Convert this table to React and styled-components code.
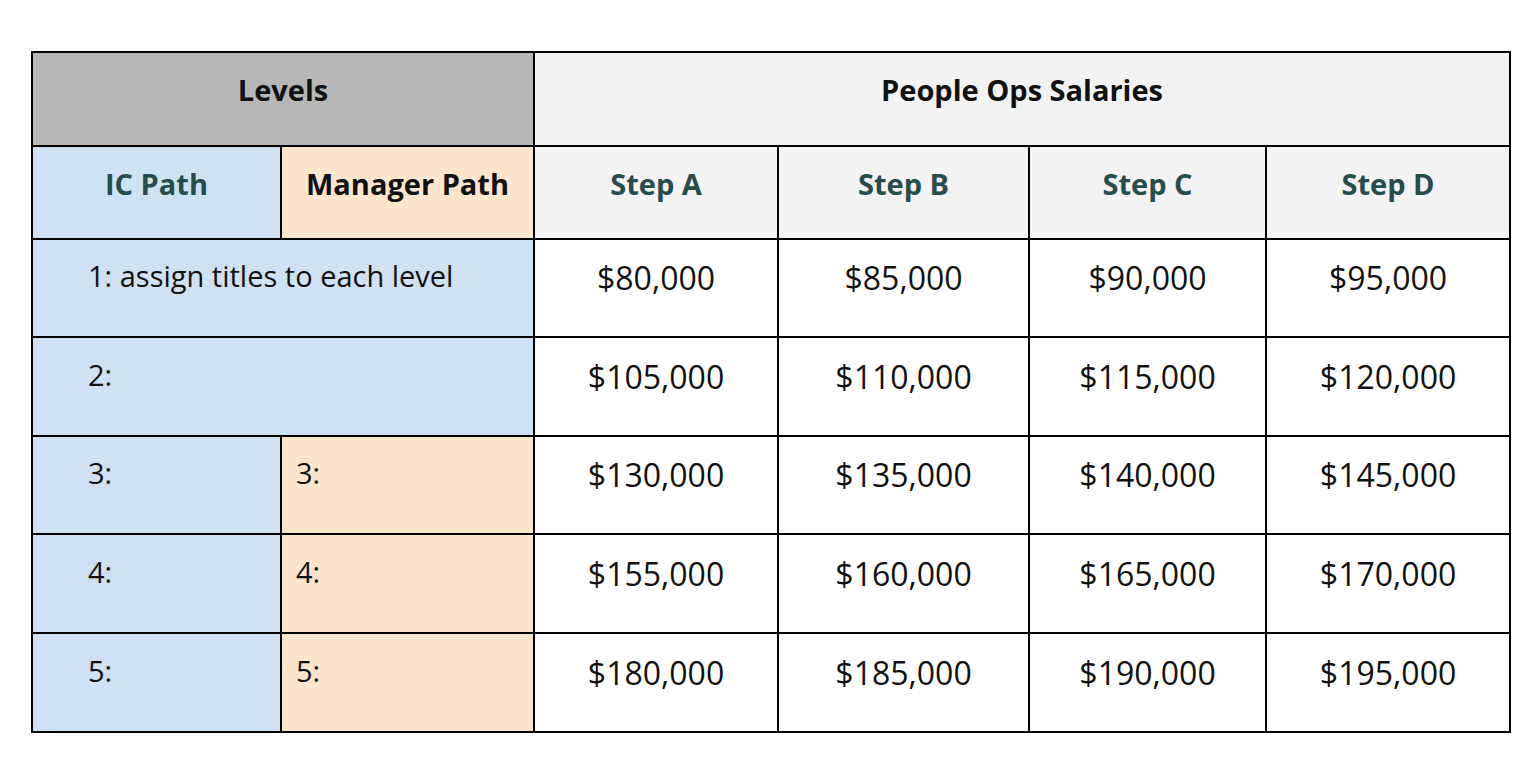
import React from 'react';
import styled, { createGlobalStyle } from 'styled-components';

const GlobalStyle = createGlobalStyle`
  body {
    margin: 0;
    background: #fff;
    font-family: 'Open Sans', 'Noto Sans', sans-serif;
  }
`;

const Page = styled.div`
  padding: 51px 0 0 31px;
`;

const Table = styled.table`
  border-collapse: collapse;
  table-layout: fixed;
  width: 1478px;
  border: 2px solid #000;
`;

const Cell = styled.td`
  border: 2px solid #000;
  background: ${(p) => p.$bg || '#fff'};
  color: ${(p) => p.$color || '#111'};
  font-size: ${(p) => p.$size || 29}px;
  font-weight: ${(p) => (p.$bold ? 700 : 400)};
  text-align: ${(p) => p.$align || 'center'};
  padding: 0 0 ${(p) => p.$padBottom ?? 18}px ${(p) => p.$padLeft || 0}px;
  vertical-align: middle;
  white-space: nowrap;
  line-height: 1.3;
`;

const Row = styled.tr`
  height: ${(p) => p.$h}px;
`;

const COLORS = {
  gray: '#b7b7b7',
  light: '#f3f3f3',
  blue: '#cfe2f3',
  orange: '#fce5cd',
  teal: '#264c4b',
};

const widths = [249, 253, 244, 251, 237, 244];

const salaries = [
  { label: '1: assign titles to each level', merged: true, values: ['$80,000', '$85,000', '$90,000', '$95,000'] },
  { label: '2:', merged: true, values: ['$105,000', '$110,000', '$115,000', '$120,000'] },
  { label: '3:', values: ['$130,000', '$135,000', '$140,000', '$145,000'] },
  { label: '4:', values: ['$155,000', '$160,000', '$165,000', '$170,000'] },
  { label: '5:', values: ['$180,000', '$185,000', '$190,000', '$195,000'] },
];

const rowHeights = [98, 99, 98, 99, 99];

const App = () => {
  return (
    <Page>
      <GlobalStyle />
      <Table>
        <colgroup>
          {widths.map((w, i) => (
            <col key={i} style={{ width: w }} />
          ))}
        </colgroup>
        <tbody>
          <Row $h={94}>
            <Cell colSpan={2} $bg={COLORS.gray} $bold>
              Levels
            </Cell>
            <Cell colSpan={4} $bg={COLORS.light} $bold>
              People Ops Salaries
            </Cell>
          </Row>
          <Row $h={93}>
            <Cell $bg={COLORS.blue} $color={COLORS.teal} $bold>
              IC Path
            </Cell>
            <Cell $bg={COLORS.orange} $bold>
              Manager Path
            </Cell>
            {['Step A', 'Step B', 'Step C', 'Step D'].map((s) => (
              <Cell key={s} $bg={COLORS.light} $color={COLORS.teal} $bold>
                {s}
              </Cell>
            ))}
          </Row>
          {salaries.map((row, i) => (
            <Row key={row.label} $h={rowHeights[i]}>
              {row.merged ? (
                <Cell colSpan={2} $bg={COLORS.blue} $align="left" $padLeft={55} $padBottom={24}>
                  {row.label}
                </Cell>
              ) : (
                <>
                  <Cell $bg={COLORS.blue} $align="left" $padLeft={55} $padBottom={24}>
                    {row.label}
                  </Cell>
                  <Cell $bg={COLORS.orange} $align="left" $padLeft={14} $padBottom={24}>
                    {row.label}
                  </Cell>
                </>
              )}
              {row.values.map((v) => (
                <Cell key={v} $size={32} $padBottom={20}>
                  {v}
                </Cell>
              ))}
            </Row>
          ))}
        </tbody>
      </Table>
    </Page>
  );
};

export default App;
